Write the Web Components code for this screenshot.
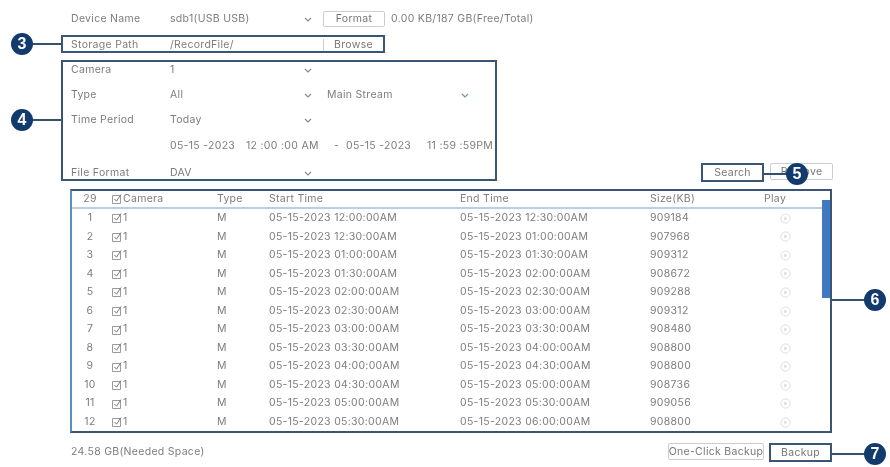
<!DOCTYPE html>
<html>
<head>
<meta charset="utf-8">
<title>Backup</title>
<style>
    html, body { margin: 0; background: #fff; }
    body { font: 10.5px/1 Inter, "Open Sans", sans-serif; letter-spacing: .3px; color: #7d7d7d; }
</style>
</head>
<body>

<dvr-page>
    <dvr-row plain>
        <span>Device Name</span>
        <dvr-select>sdb1(USB USB)</dvr-select>
        <dvr-button tall="16">Format</dvr-button>
        <span class="free">0.00 KB/187 GB(Free/Total)</span>
    </dvr-row>
    <dvr-box slot="form" tall="18">
        <dvr-row>
            <span>Storage Path</span>
            <dvr-select nochevron>/RecordFile/</dvr-select>
            <dvr-button flat wide="60">Browse</dvr-button>
        </dvr-row>
    </dvr-box>
    <dvr-box slot="form" tall="121" wide="436">
        <dvr-row><span>Camera</span><dvr-select>1</dvr-select></dvr-row>
        <dvr-row gap="11"><span>Type</span><dvr-select>All</dvr-select><dvr-select second>Main Stream</dvr-select></dvr-row>
        <dvr-row gap="11"><span>Time Period</span><dvr-select>Today</dvr-select></dvr-row>
        <dvr-row gap="12"><span></span><dvr-dates></dvr-dates></dvr-row>
        <dvr-row gap="13"><span>File Format</span><dvr-select>DAV</dvr-select></dvr-row>
    </dvr-box>
</dvr-page>

<script>
class DvrPage extends HTMLElement {
    connectedCallback() {
        this.attachShadow({ mode: 'open' });
        this.shadowRoot.innerHTML = `
            <style>
                :host { display: block; position: relative; width: 890px; height: 467px; box-sizing: border-box; padding-top: 11px; overflow: hidden; filter: blur(.6px); }
                .device { display: block; margin-left: 61px; }
                .top { display: flex; justify-content: space-between; align-items: flex-end; padding-right: 57px; }
                .forms { display: flex; flex-direction: column; gap: 7px; margin: 8px 0 1px 61px; }
                .actions { display: flex; gap: 6px; }
                .bottom { display: flex; align-items: center; margin: 10px 58px 0 71px; }
                .needed { flex: 1; }
                .btns { display: flex; gap: 5px; }
            </style>
            <div class="device"><slot></slot></div>
            <div class="top">
                <div class="forms"><slot name="form"></slot></div>
                <div class="actions">
                    <dvr-button boxed wide="63">Search</dvr-button>
                    <dvr-button wide="63">Remove</dvr-button>
                </div>
            </div>
            <dvr-table></dvr-table>
            <div class="bottom">
                <span class="needed">24.58 GB(Needed Space)</span>
                <div class="btns">
                    <dvr-button wide="96">One-Click Backup</dvr-button>
                    <dvr-button boxed wide="63">Backup</dvr-button>
                </div>
            </div>
            <dvr-callout n="3" x="22" y="44" to="61"></dvr-callout>
            <dvr-callout n="4" x="22" y="120" to="61"></dvr-callout>
            <dvr-callout n="5" x="797" y="174" to="764"></dvr-callout>
            <dvr-callout n="6" x="875" y="300" to="832"></dvr-callout>
            <dvr-callout n="7" x="875" y="454" to="832"></dvr-callout>
        `;
    }
}

class DvrRow extends HTMLElement {
    connectedCallback() {
        this.attachShadow({ mode: 'open' });
        this.shadowRoot.innerHTML = `
            <style>
                :host { display: flex; align-items: center; box-sizing: border-box; height: 14px; margin-top: ${this.getAttribute('gap') || 0}px; padding: 2px 0 0 8px; }
                :host([plain]) { height: 16px; padding: 0 0 0 10px; }
                ::slotted(span:first-child) { width: 99px; flex: none; }
                ::slotted(.free) { margin-left: 6px; }
            </style>
            <slot></slot>
        `;
    }
}

class DvrBox extends HTMLElement {
    connectedCallback() {
        this.attachShadow({ mode: 'open' });
        this.shadowRoot.innerHTML = `
            <style>
                :host { display: block; box-sizing: border-box; width: ${this.getAttribute('wide') || 324}px; height: ${this.getAttribute('tall')}px; border: 2px solid #3b5675; }
            </style>
            <slot></slot>
        `;
    }
}

class DvrSelect extends HTMLElement {
    connectedCallback() {
        this.attachShadow({ mode: 'open' });
        const chevron = this.hasAttribute('nochevron') ? '' : `
            <svg width="8" height="5" viewBox="0 0 8 5"><path d="M1 1l3 3 3-3" fill="none" stroke="${this.hasAttribute('second') ? '#6f93c4' : '#888'}" stroke-width="1.2"/></svg>`;
        this.shadowRoot.innerHTML = `
            <style>
                :host { display: flex; align-items: center; justify-content: space-between; width: 142px; flex: none; }
                :host([second]) { margin-left: 15px; }
            </style>
            <slot></slot>${chevron}
        `;
    }
}

class DvrButton extends HTMLElement {
    connectedCallback() {
        this.attachShadow({ mode: 'open' });
        this.shadowRoot.innerHTML = `
            <style>
                :host { display: flex; align-items: center; justify-content: center; box-sizing: border-box; flex: none; width: ${this.getAttribute('wide') || 62}px; height: ${this.getAttribute('tall') || 17}px; border: 1px solid #c9ced3; border-radius: 2px; background: #fff; color: #777; white-space: nowrap; }
                :host([wide]) { padding-top: 2px; }
                :host([tall]), :host([flat]) { margin-left: 11px; }
                :host([flat]) { height: 12px; padding-top: 0; border-width: 0 0 0 1px; border-radius: 0; }
                :host([boxed]) { height: 19px; border: 2px solid #3b5675; border-radius: 0; }
            </style>
            <slot></slot>
        `;
    }
}

class DvrDates extends HTMLElement {
    connectedCallback() {
        this.attachShadow({ mode: 'open' });
        this.shadowRoot.innerHTML = `
            <style>
                :host { display: grid; grid-template-columns: 76px 88px 12px 81px auto; white-space: nowrap; }
            </style>
            <span>05-15 -2023</span><span>12 :00 :00 AM</span><span>-</span><span>05-15 -2023</span><span>11 :59 :59PM</span>
        `;
    }
}

class DvrTable extends HTMLElement {
    connectedCallback() {
        this.attachShadow({ mode: 'open' });
        const files = [
            ['12:00:00AM', '12:30:00AM', '909184'], ['12:30:00AM', '01:00:00AM', '907968'],
            ['01:00:00AM', '01:30:00AM', '909312'], ['01:30:00AM', '02:00:00AM', '908672'],
            ['02:00:00AM', '02:30:00AM', '909288'], ['02:30:00AM', '03:00:00AM', '909312'],
            ['03:00:00AM', '03:30:00AM', '908480'], ['03:30:00AM', '04:00:00AM', '908800'],
            ['04:00:00AM', '04:30:00AM', '908800'], ['04:30:00AM', '05:00:00AM', '908736'],
            ['05:00:00AM', '05:30:00AM', '909056'], ['05:30:00AM', '06:00:00AM', '908800']
        ];
        const check = `<svg width="12" height="12" viewBox="0 0 12 12"><path d="M1.5 2.5h8v8h-8z" fill="none" stroke="#9a9a9a"/><path d="M3.5 6l2 2.2 4.5-6.7" fill="none" stroke="#777"/></svg>`;
        const play = `<svg width="11" height="11" viewBox="0 0 11 11"><circle cx="5.5" cy="5.5" r="4.6" fill="none" stroke="#dcdcdc"/><path d="M4.4 3.6l2.8 1.9-2.8 1.9z" fill="#d8d8d8"/></svg>`;
        const day = '05-15-2023 ';
        const rows = files.map((f, i) => `
            <div class="row">
                <span class="num">${i + 1}</span>
                <span class="cam">${check}1</span>
                <span>M</span>
                <span>${day}${f[0]}</span>
                <span>${day}${f[1]}</span>
                <span>${f[2]}</span>
                <span class="play">${play}</span>
            </div>`).join('');
        this.shadowRoot.innerHTML = `
            <style>
                :host { display: flex; box-sizing: border-box; width: 762px; height: 244px; margin: 7px 0 0 70px; border: 2px solid #3b5675; border-left-color: #5b8dbd; }
                .rows { width: 750px; flex: none; }
                .row { display: grid; grid-template-columns: 36px 109px 52px 191px 190px 114px 58px; align-items: center; height: 18.55px; white-space: nowrap; }
                .head { height: 16px; border-bottom: 2px solid #b9d0e3; }
                .num { text-align: center; }
                .cam { display: flex; align-items: center; padding-left: 3px; }
                .play { display: flex; padding-left: 16px; }
                .head .play { padding-left: 0; }
                .bar { width: 9px; height: 98px; margin-top: 9px; background: #3f79bf; }
            </style>
            <div class="rows">
                <div class="row head">
                    <span class="num">29</span>
                    <span class="cam">${check}Camera</span>
                    <span>Type</span>
                    <span>Start Time</span>
                    <span>End Time</span>
                    <span>Size(KB)</span>
                    <span class="play">Play</span>
                </div>
                ${rows}
            </div>
            <div class="bar"></div>
        `;
    }
}

class DvrCallout extends HTMLElement {
    connectedCallback() {
        this.attachShadow({ mode: 'open' });
        const x = +this.getAttribute('x');
        const y = +this.getAttribute('y');
        const to = +this.getAttribute('to');
        this.shadowRoot.innerHTML = `
            <style>
                :host { position: absolute; left: 0; top: 0; }
                .line { position: absolute; left: ${Math.min(x, to)}px; top: ${y - 1}px; width: ${Math.abs(to - x)}px; height: 2px; background: #34506f; }
                .dot { position: absolute; left: ${x - 11}px; top: ${y - 11}px; width: 22px; height: 22px; border-radius: 50%; background: #123a6c; color: #fff; font: bold 16px/22px "Liberation Sans", sans-serif; text-align: center; }
            </style>
            <div class="line"></div>
            <div class="dot">${this.getAttribute('n')}</div>
        `;
    }
}

customElements.define('dvr-page', DvrPage);
customElements.define('dvr-row', DvrRow);
customElements.define('dvr-box', DvrBox);
customElements.define('dvr-select', DvrSelect);
customElements.define('dvr-button', DvrButton);
customElements.define('dvr-dates', DvrDates);
customElements.define('dvr-table', DvrTable);
customElements.define('dvr-callout', DvrCallout);
</script>
</body>
</html>
